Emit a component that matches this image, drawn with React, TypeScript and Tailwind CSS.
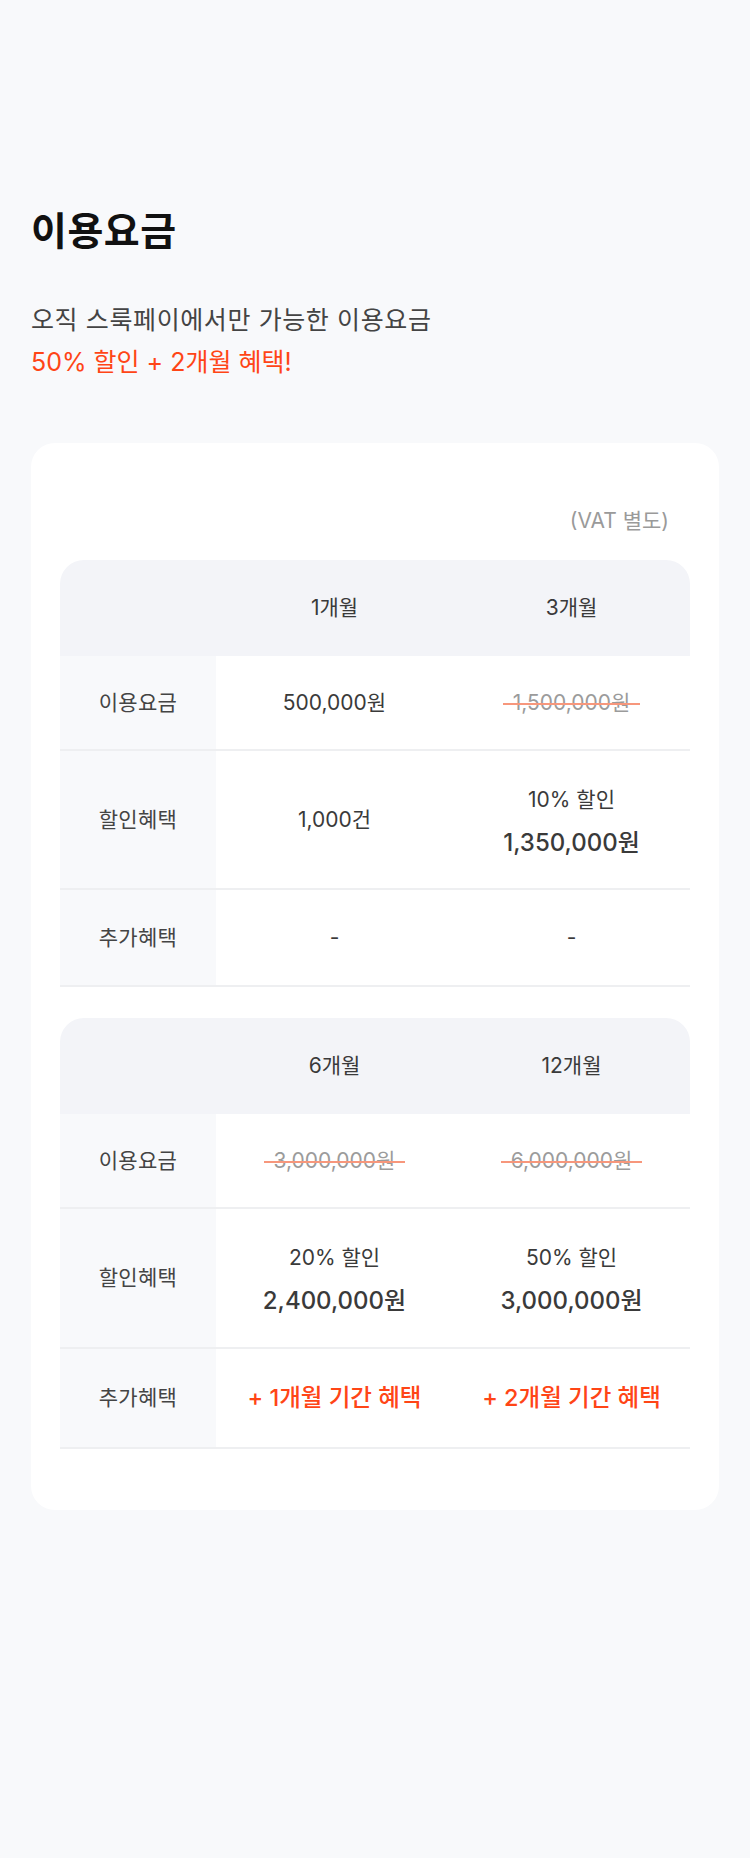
import type { ReactNode } from 'react'

const FONT = "font-['Inter','Noto_Sans_CJK_KR',sans-serif]"

interface Plan {
  label: string
  price: string
  struck: boolean
  discount: ReactNode
  extra: ReactNode
}

const TABLES: Plan[][] = [
  [
    { label: '1개월', price: '500,000원', struck: false, discount: <Plain>1,000건</Plain>, extra: <Plain>-</Plain> },
    { label: '3개월', price: '1,500,000원', struck: true, discount: <Discount pct="10% 할인" price="1,350,000원" />, extra: <Plain>-</Plain> },
  ],
  [
    { label: '6개월', price: '3,000,000원', struck: true, discount: <Discount pct="20% 할인" price="2,400,000원" />, extra: <Bonus>+ 1개월 기간 혜택</Bonus> },
    { label: '12개월', price: '6,000,000원', struck: true, discount: <Discount pct="50% 할인" price="3,000,000원" />, extra: <Bonus>+ 2개월 기간 혜택</Bonus> },
  ],
]

export default function App() {
  return (
    <div className={`min-h-screen bg-[#f8f9fb] px-[31px] pt-[208px] pb-[350px] ${FONT}`}>
      {/* ── Heading ─────────────────────────────────────────── */}
      <h1 className="text-[39px] leading-[46px] font-bold text-[#111111] tracking-[0.5px]">이용요금</h1>
      <p className="mt-[45px] text-[25px] leading-[42px] text-[#444444] tracking-[0.6px]">
        오직 스룩페이에서만 가능한 이용요금
        <br />
        <span className="text-[#ff4516] tracking-[0px]">50% 할인 + 2개월 혜택!</span>
      </p>

      {/* ── Price card ──────────────────────────────────────── */}
      <div className="mt-[60px] rounded-[24px] bg-white px-[29px] pt-[63px] pb-[61px]">
        <p className="text-right text-[21px] leading-[30px] text-[#9a9a9a] pr-[21px]">(VAT 별도)</p>

        <div className="mt-[24px] flex flex-col gap-[31px]">
          {TABLES.map((plans, i) => (
            <PriceTable key={i} plans={plans} lastTall={i === 1} />
          ))}
        </div>
      </div>
    </div>
  )
}

function PriceTable({ plans, lastTall }: { plans: Plan[]; lastTall: boolean }) {
  return (
    <div className="text-[#3a3a3a]">
      <div className="grid h-[96px] grid-cols-[156px_1fr_1fr] items-center rounded-t-[24px] bg-[#f3f4f8]">
        <div />
        {plans.map(p => (
          <div key={p.label} className="text-center text-[21px]">{p.label}</div>
        ))}
      </div>

      <Row label="이용요금" height="h-[95px]">
        {plans.map(p => (
          <Price key={p.label} value={p.price} struck={p.struck} />
        ))}
      </Row>
      <Row label="할인혜택" height={lastTall ? 'h-[140px]' : 'h-[139px]'}>
        {plans.map(p => <div key={p.label}>{p.discount}</div>)}
      </Row>
      <Row label="추가혜택" height={lastTall ? 'h-[100px]' : 'h-[97px]'}>
        {plans.map(p => <div key={p.label}>{p.extra}</div>)}
      </Row>
    </div>
  )
}

function Row({ label, height, children }: { label: string; height: string; children: ReactNode }) {
  return (
    <div className={`grid grid-cols-[156px_1fr_1fr] border-b-2 border-[#eeeff1] ${height}`}>
      <div className="flex items-center justify-center bg-[#f8f9fb] text-[21px] tracking-[0.3px] text-[#444444]">{label}</div>
      {Array.isArray(children) &&
        children.map((c, i) => (
          <div key={i} className="flex items-center justify-center text-center">
            {c}
          </div>
        ))}
    </div>
  )
}

function Price({ value, struck }: { value: string; struck: boolean }) {
  if (!struck) return <span className="text-[21px]">{value}</span>
  return (
    <span className="relative text-[21px] text-[#9b9b9b]">
      {value}
      <span className="absolute left-[-10px] right-[-10px] top-1/2 h-[2px] bg-[#f7977c]" />
    </span>
  )
}

function Plain({ children }: { children: ReactNode }) {
  return <span className="text-[21px]">{children}</span>
}

function Discount({ pct, price }: { pct: string; price: string }) {
  return (
    <div className="flex flex-col items-center pt-[5px]">
      <span className="text-[21px] leading-[30px]">{pct}</span>
      <span className="mt-[11px] text-[24px] leading-[34px] font-medium">{price}</span>
    </div>
  )
}

function Bonus({ children }: { children: ReactNode }) {
  return <span className="text-[23.5px] font-medium text-[#ff4516]">{children}</span>
}
